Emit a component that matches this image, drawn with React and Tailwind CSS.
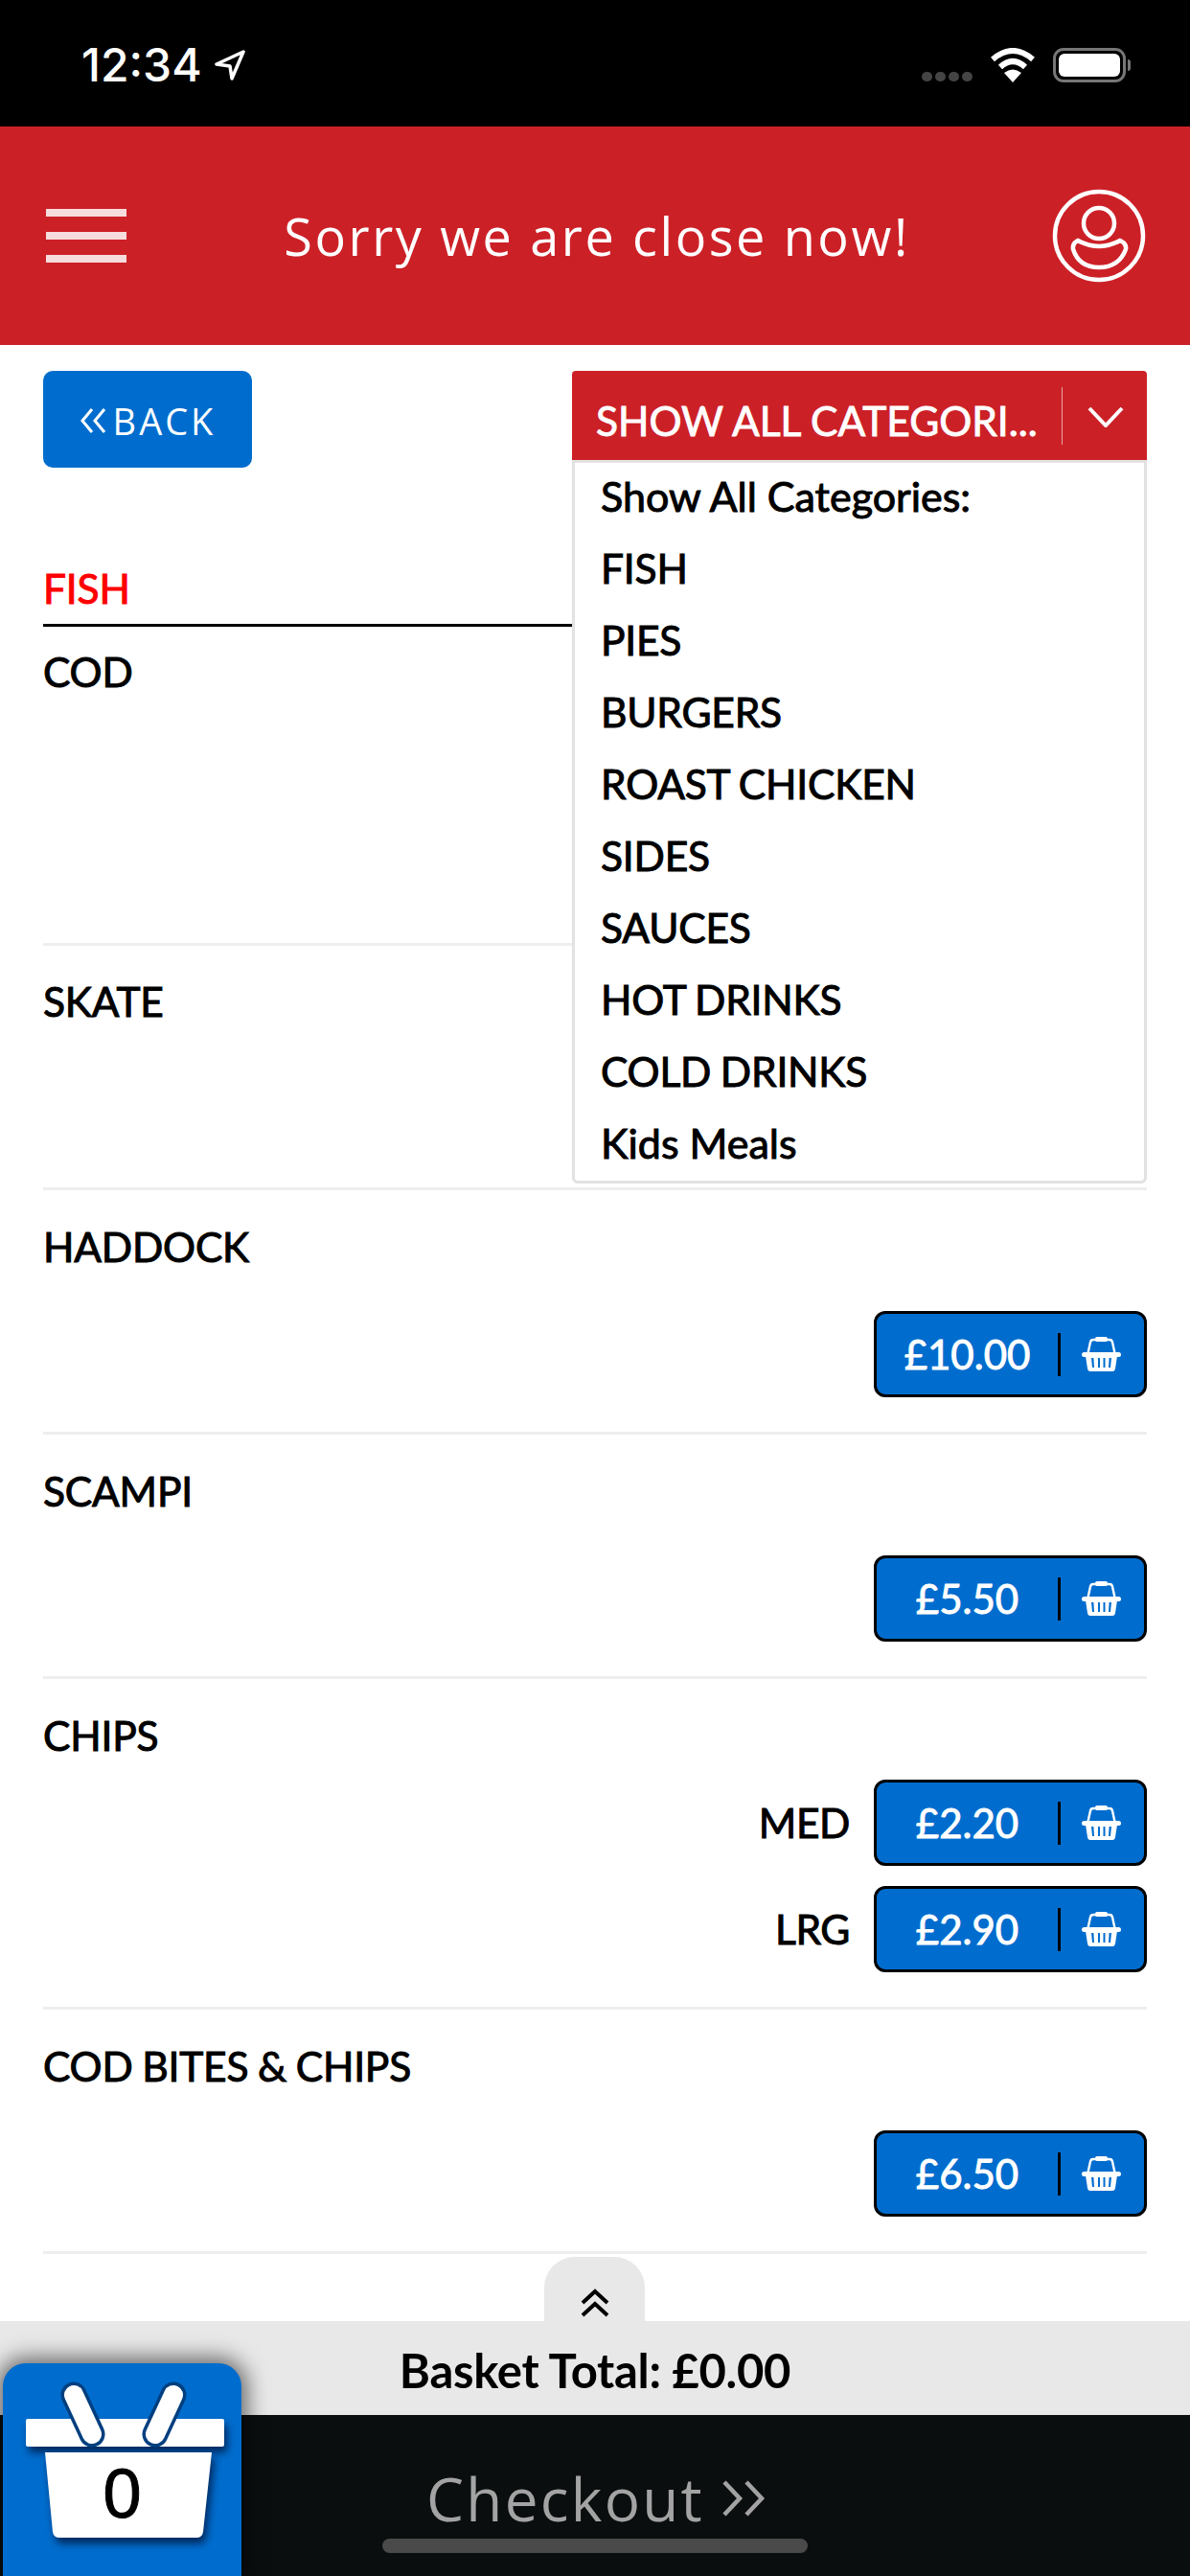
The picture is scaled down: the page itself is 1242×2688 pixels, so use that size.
const categories = [
  "Show All Categories:",
  "FISH",
  "PIES",
  "BURGERS",
  "ROAST CHICKEN",
  "SIDES",
  "SAUCES",
  "HOT DRINKS",
  "COLD DRINKS",
  "Kids Meals",
];

const items = [
  { name: "COD", height: "h-[333px]", top: "pt-[22px]", gap: "mt-[46px]", prices: [] },
  { name: "SKATE", height: "h-[255px]", top: "pt-[33px]", gap: "mt-[42px]", prices: [] },
  { name: "HADDOCK", height: "h-[255px]", top: "pt-[34px]", gap: "mt-[42px]", prices: [{ price: "£10.00" }] },
  { name: "SCAMPI", height: "h-[255px]", top: "pt-[34px]", gap: "mt-[42px]", prices: [{ price: "£5.50" }] },
  {
    name: "CHIPS",
    height: "h-[345px]",
    top: "pt-[34px]",
    gap: "mt-[21px]",
    prices: [
      { label: "MED", price: "£2.20" },
      { label: "LRG", price: "£2.90" },
    ],
  },
  { name: "COD BITES & CHIPS", height: "h-[255px]", top: "pt-[34px]", gap: "mt-[42px]", prices: [{ price: "£6.50" }] },
];

function BasketIcon() {
  return (
    <svg width="41" height="36" viewBox="0 0 41 36" fill="none">
      <path d="M6.5 17 L9 5.5 Q9.5 3 12 3 H29 Q31.5 3 32 5.5 L34.5 17" stroke="white" strokeWidth="2.4" />
      <rect x="14" y="0" width="13" height="5" rx="2" fill="white" />
      <rect x="0" y="16" width="41" height="5" rx="2.5" fill="white" />
      <path
        fillRule="evenodd"
        d="M4 20 H37 L35 33 Q34.6 36 32 36 H9 Q6.4 36 6 33 Z M10 22 L11 32 H13 L12.4 22 Z M17 22 V32 H19 V22 Z M22.5 22 V32 H24.5 V22 Z M28.6 22 L28 32 H30 L31 22 Z"
        fill="white"
      />
    </svg>
  );
}

function PriceButton({ price }) {
  return (
    <button className="flex h-[90px] w-[285px] items-center rounded-[12px] border-[3px] border-black bg-[#006dce] text-white">
      <span className="w-[189px] text-center text-[42px] [-webkit-text-stroke:0.9px_white]">{price}</span>
      <span className="h-[45px] w-[3px] bg-black" />
      <span className="flex flex-1 justify-center pr-[2px]">
        <BasketIcon />
      </span>
    </button>
  );
}

function MenuRow({ item }) {
  return (
    <div className={`${item.height} border-b-[3px] border-[#eeeeee]`}>
      <div className={`${item.top} text-[42.5px] leading-[50px] tracking-[-0.2px] text-black [word-spacing:-1px] [-webkit-text-stroke:1px_black]`}>
        {item.name}
      </div>
      <div className={`${item.gap} flex flex-col items-end gap-[21px]`}>
        {item.prices.map((p) => (
          <div key={p.price} className="flex items-center gap-[25px]">
            {p.label && (
              <span className="text-[42.5px] tracking-[-0.4px] text-black [-webkit-text-stroke:1px_black]">{p.label}</span>
            )}
            <PriceButton price={p.price} />
          </div>
        ))}
      </div>
    </div>
  );
}

function CategorySelect() {
  return (
    <div className="relative w-[600px]">
      <div className="flex h-[93px] items-center rounded-t-[4px] bg-[#cc2027] pl-[25px] text-white">
        <span className="w-[486px] pt-[10px] text-[42.5px] whitespace-nowrap [-webkit-text-stroke:0.9px_white]">
          SHOW ALL CATEGORI...
        </span>
        <span className="h-[60px] w-[1px] bg-[#e9a5a8]" />
        <svg className="ml-[26px] mt-[3px]" width="38" height="22" viewBox="0 0 38 22" fill="none">
          <path d="M2 2 L19 20 L36 2" stroke="white" strokeWidth="4" />
        </svg>
      </div>
      <div className="absolute top-[93px] left-0 z-10 h-[755px] w-[600px] rounded-b-[6px] border-[3px] border-[#e2e2e2] bg-white pt-[5px] pl-[27px]">
        {categories.map((c) => (
          <div
            key={c}
            className={
              c === c.toUpperCase()
                ? "h-[75px] text-[42.5px] leading-[60px] tracking-[-0.2px] text-black [word-spacing:-1px] [-webkit-text-stroke:1px_black]"
                : "h-[75px] text-[43px] leading-[60px] text-black [-webkit-text-stroke:1px_black]"
            }
          >
            {c}
          </div>
        ))}
      </div>
    </div>
  );
}

function App() {
  return (
    <div className="relative flex h-[2688px] w-[1242px] flex-col overflow-hidden bg-white font-['Lato',sans-serif]">
      {/* status bar */}
      <div className="flex h-[132px] items-start justify-between bg-black pt-[46px] pr-[62px] pl-[85px] text-white">
        <div className="flex items-center gap-[12px]">
          <span className="font-['Inter',sans-serif] text-[48px] leading-[44px] font-medium">12:34</span>
          <svg width="34" height="34" viewBox="0 0 34 34" fill="none">
            <path d="M31 3 L3 16 L17 18 L19 31 Z" stroke="white" strokeWidth="3.5" strokeLinejoin="round" />
          </svg>
        </div>
        <div className="flex items-end gap-[18px] pt-[4px]">
          <div className="mb-[1px] flex gap-[3px]">
            <span className="h-[10px] w-[11px] rounded-full bg-[#444444]" />
            <span className="h-[10px] w-[11px] rounded-full bg-[#444444]" />
            <span className="h-[10px] w-[11px] rounded-full bg-[#444444]" />
            <span className="h-[10px] w-[11px] rounded-full bg-[#444444]" />
          </div>
          <svg width="48" height="36" viewBox="0 0 48 36" fill="none">
            <path d="M3 12 Q24 -6 45 12" stroke="white" strokeWidth="6" />
            <path d="M11 20 Q24 8 37 20" stroke="white" strokeWidth="6" />
            <path d="M24 36 L15 26 Q24 19 33 26 Z" fill="white" />
          </svg>
          <div className="flex items-center gap-[2px]">
            <div className="h-[36px] w-[76px] rounded-[11px] border-[3px] border-[#777777] p-[3px]">
              <div className="h-full w-full rounded-[6px] bg-white" />
            </div>
            <span className="h-[12px] w-[3px] rounded-r-full bg-[#777777]" />
          </div>
        </div>
      </div>

      {/* header */}
      <div className="flex h-[228px] items-center justify-between bg-[#cc2027] pr-[46px] pl-[48px] text-white">
        <div className="flex w-[84px] flex-col gap-[16px]">
          <span className="h-[8px] bg-[#f6dcdc]" />
          <span className="h-[8px] bg-[#f6dcdc]" />
          <span className="h-[8px] bg-[#f6dcdc]" />
        </div>
        <div className="pl-[16px] font-['Open_Sans',sans-serif] text-[54px] font-medium tracking-[2.6px] text-white">
          Sorry we are close now!
        </div>
        <svg width="98" height="98" viewBox="0 0 98 98" fill="none">
          <circle cx="49" cy="49" r="46" stroke="white" strokeWidth="4.5" />
          <circle cx="49" cy="36" r="16" stroke="white" strokeWidth="4.5" />
          <path d="M27 54 Q49 66 71 54 Q78 57 77 63 Q70 82 49 82 Q28 82 22 63 Q21 57 27 54 Z" stroke="white" strokeWidth="4.5" />
        </svg>
      </div>

      {/* page content */}
      <div className="flex-1 px-[45px] pt-[27px]">
        <div className="flex items-start justify-between">
          <button className="flex h-[101px] w-[218px] items-center justify-center gap-[5px] rounded-[10px] bg-[#006dce] pt-[3px] font-['Open_Sans',sans-serif] text-[38px] font-medium tracking-[3px] text-white">
            <svg width="30" height="30" viewBox="0 0 30 30" fill="none">
              <path d="M13 3 L3 15 L13 27 M26 3 L16 15 L26 27" stroke="white" strokeWidth="3" />
            </svg>
            BACK
          </button>
          <CategorySelect />
        </div>

        <div className="mt-[96px] border-b-[3px] border-black pb-[7px] text-[42.5px] leading-[60px] tracking-[-0.2px] text-[#ff0000] [-webkit-text-stroke:1px_#ff0000]">
          FISH
        </div>
        {items.map((item) => (
          <MenuRow key={item.name} item={item} />
        ))}
      </div>

      {/* footer */}
      <div className="relative">
        <div className="absolute -top-[67px] left-[568px] flex h-[67px] w-[105px] items-end justify-center rounded-t-[32px] bg-[#e8e8e8] pb-[4px]">
          <svg width="32" height="30" viewBox="0 0 32 30" fill="none">
            <path d="M3 15 L16 3 L29 15 M3 28 L16 16 L29 28" stroke="black" strokeWidth="4" />
          </svg>
        </div>
        <div className="flex h-[98px] items-center justify-center bg-[#e8e8e8] pt-[6px] text-[49px] font-bold tracking-[-0.3px] text-black">
          Basket Total: £0.00
        </div>
        <div className="relative flex h-[168px] justify-center bg-[#0b0e0f] pt-[52px] pl-[2px]">
          <div className="flex items-center gap-[18px] self-start font-['Open_Sans',sans-serif] text-[62px] leading-[70px] tracking-[2.3px] text-[#a3a3a3]">
            Checkout
            <svg width="46" height="38" viewBox="0 0 46 38" fill="none">
              <path d="M3 2 L19 19 L3 36 M26 2 L42 19 L26 36" stroke="#a3a3a3" strokeWidth="4.5" />
            </svg>
          </div>
          <span className="absolute bottom-[24px] left-[399px] h-[15px] w-[444px] rounded-full bg-[#4a4a4a]" />
        </div>
      </div>

      {/* basket badge */}
      <div className="absolute bottom-0 left-[3px] flex h-[222px] w-[249px] justify-center rounded-t-[24px] bg-[#006dce] shadow-[0_0_22px_6px_rgba(0,0,0,0.55)]">
        <svg className="absolute top-0 left-0" width="249" height="222" viewBox="0 0 249 222" fill="none">
          <g style={{ filter: "drop-shadow(3px 6px 4px rgba(0,20,60,0.8))" }}>
            <rect x="24" y="58" width="207" height="29" rx="2" fill="white" />
            <path d="M44 93 H218 L209 176 Q208 182 202 182 H59 Q53 182 52 176 Z" fill="white" />
          </g>
          <path d="M74 33 L93 74 M178 33 L159 74" stroke="#003f7f" strokeWidth="27" strokeLinecap="round" />
          <path d="M74 33 L93 74 M178 33 L159 74" stroke="white" strokeWidth="20" strokeLinecap="round" />
        </svg>
        <span className="relative mt-[96px] font-['Liberation_Sans',sans-serif] text-[72px] leading-[80px] text-black [-webkit-text-stroke:1px_black]">
          0
        </span>
      </div>
    </div>
  );
}

export default App;
